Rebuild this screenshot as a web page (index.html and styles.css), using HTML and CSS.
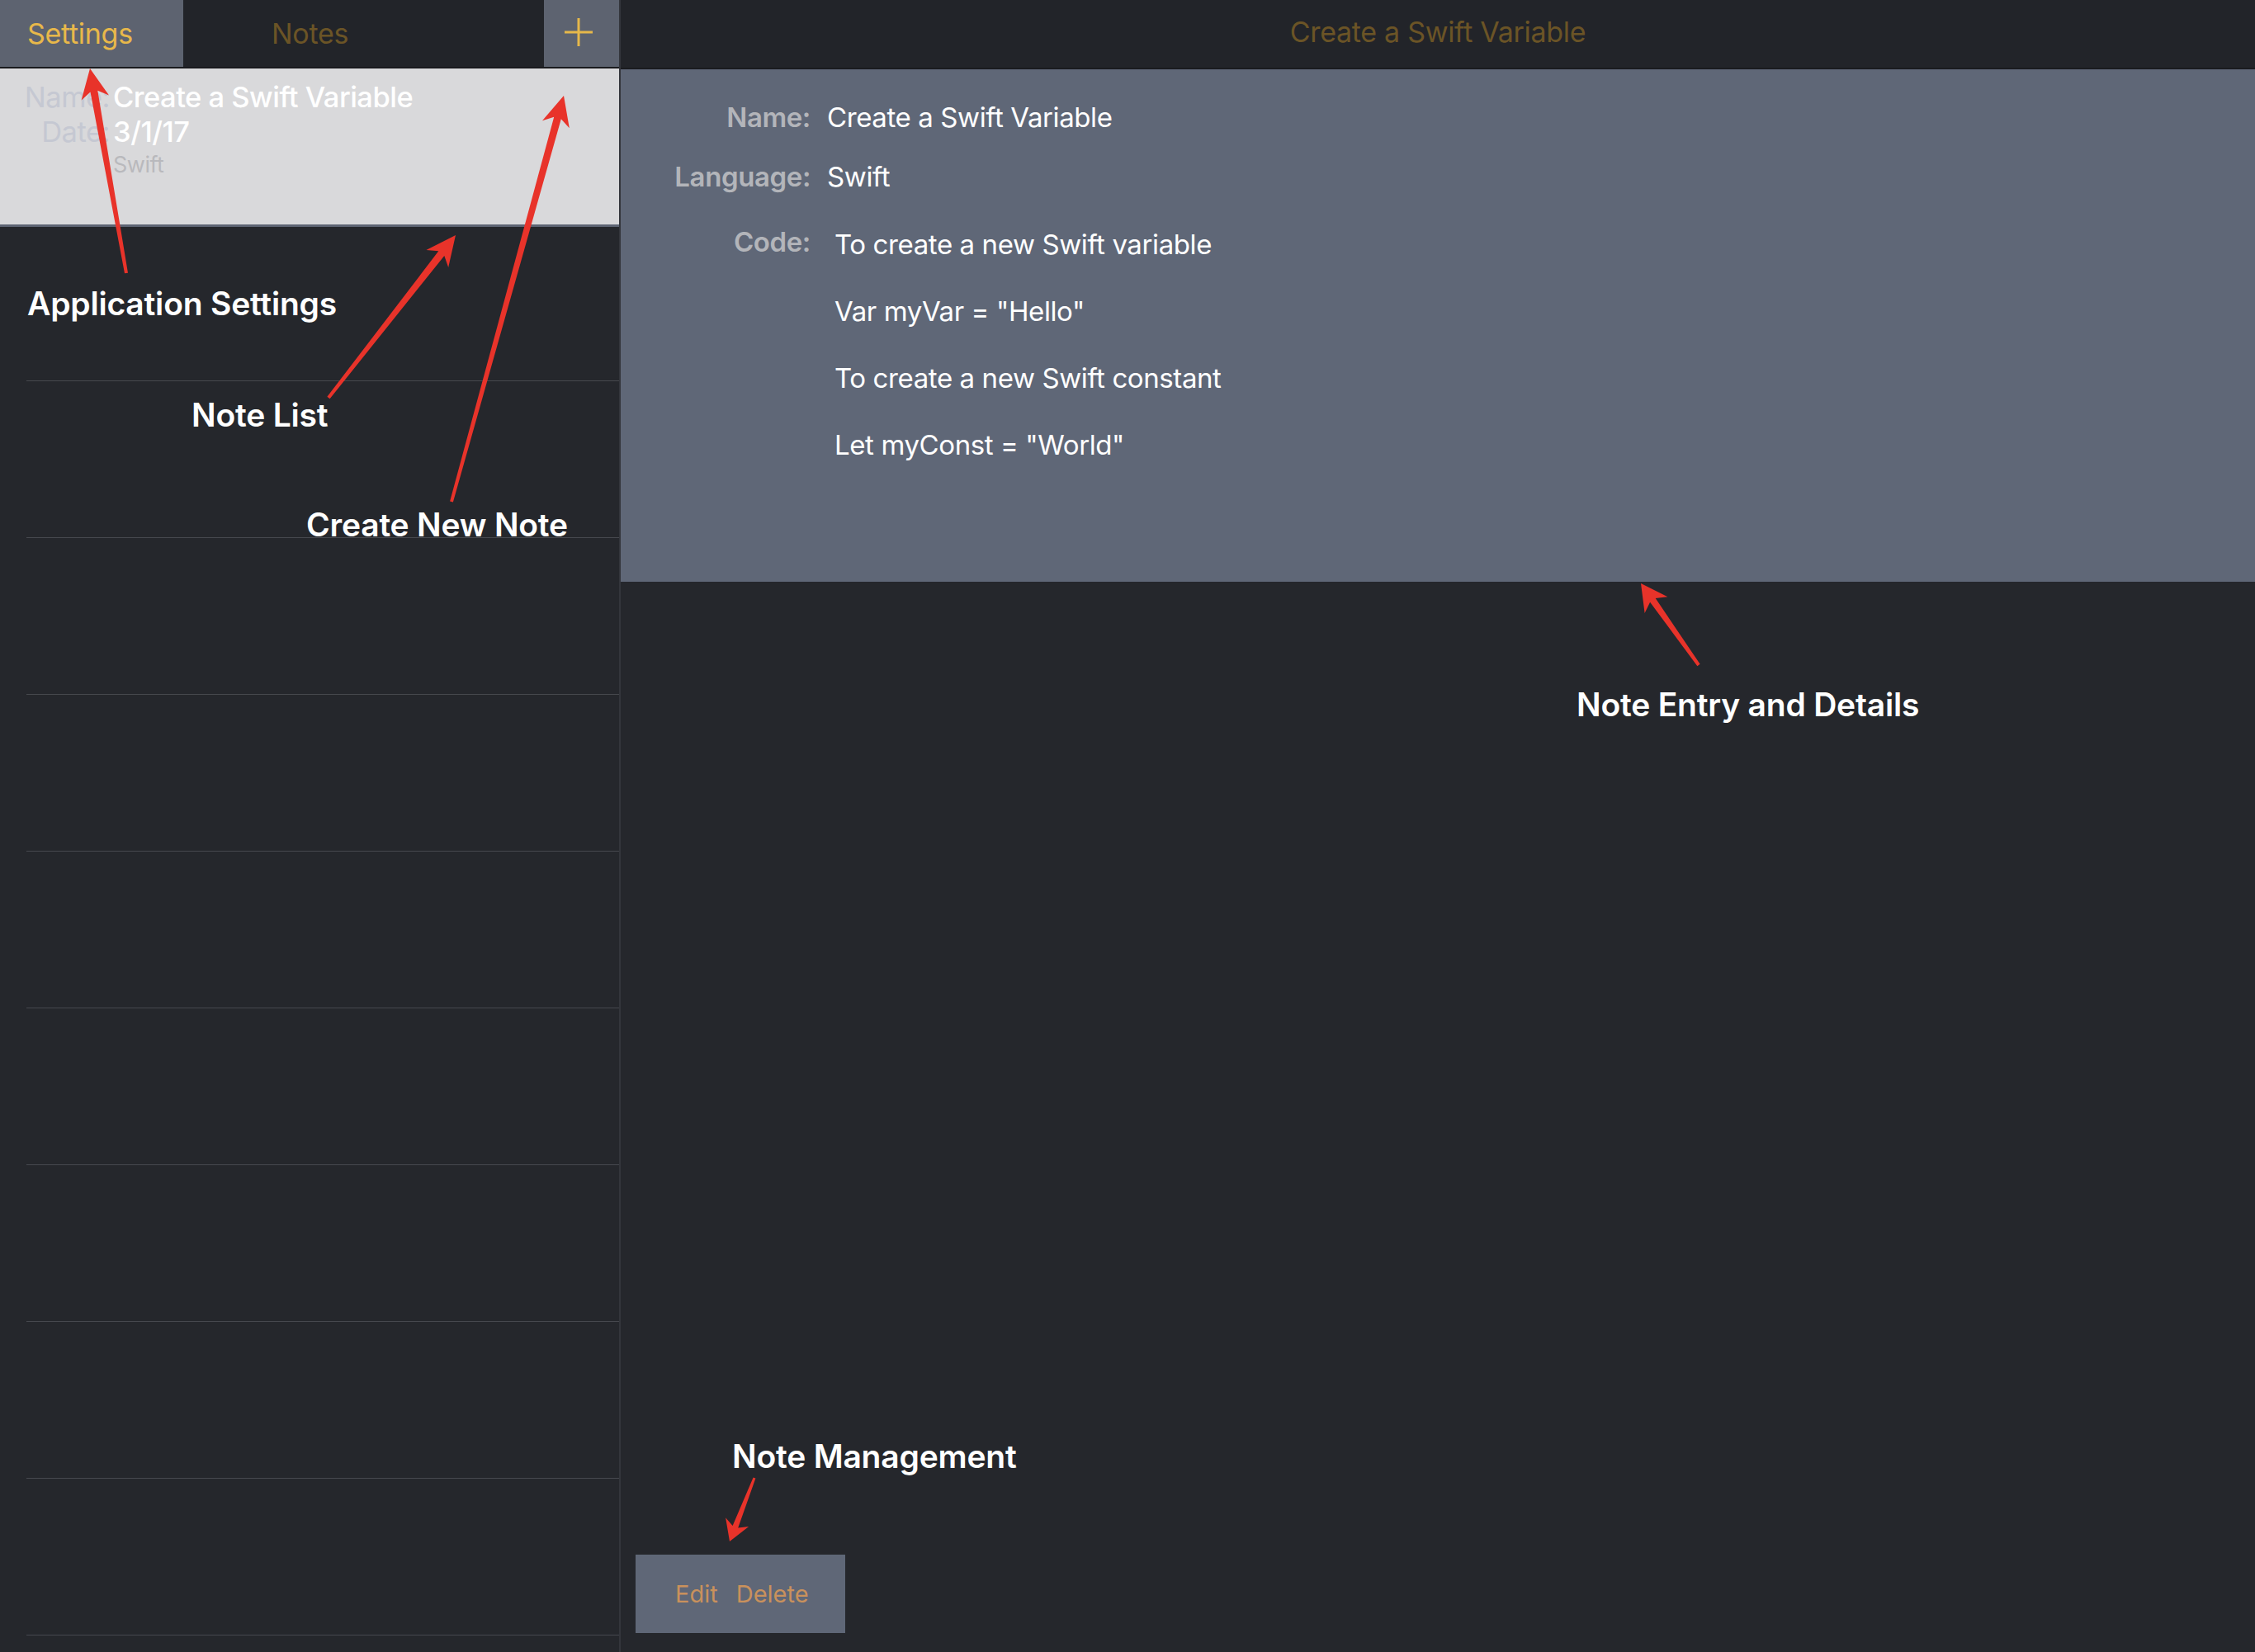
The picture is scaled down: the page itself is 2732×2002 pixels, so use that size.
FILE: index.html
```html
<!DOCTYPE html>
<html lang="en">
<head>
<meta charset="utf-8">
<title>Notes</title>
<link rel="stylesheet" href="styles.css">
</head>
<body>
<div class="app">
  <aside class="sidebar">
    <div class="sidebar-bar">
      <div class="tab tab-active">Settings</div>
      <div class="tab tab-notes">Notes</div>
      <div class="add-btn">
        <svg width="40" height="40" viewBox="0 0 40 40"><path d="M20 3V37M3 20H37" stroke="#e6b84a" stroke-width="3" fill="none"/></svg>
      </div>
    </div>
    <ul class="note-list">
      <li class="note note-selected">
        <div class="note-line"><span class="note-label">Name:</span><span class="note-value">Create a Swift Variable</span></div>
        <div class="note-line"><span class="note-label">Date:</span><span class="note-value">3/1/17</span></div>
        <div class="note-line note-sub"><span class="note-label"></span><span class="note-lang">Swift</span></div>
      </li>
      <li class="note note-first"></li>
      <li class="note"></li>
      <li class="note"></li>
      <li class="note"></li>
      <li class="note"></li>
      <li class="note"></li>
      <li class="note"></li>
      <li class="note"></li>
      <li class="note"></li>
    </ul>
  </aside>
  <main class="detail">
    <header class="detail-bar">Create a Swift Variable</header>
    <section class="detail-panel">
      <div class="field">
        <span class="field-label">Name:</span>
        <span class="field-value">Create a Swift Variable</span>
      </div>
      <div class="field field-lang">
        <span class="field-label">Language:</span>
        <span class="field-value">Swift</span>
      </div>
      <div class="field field-code">
        <span class="field-label code-label">Code:</span>
        <div class="code">
          <div class="code-line">To create a new Swift variable</div>
          <div class="code-line">Var myVar = "Hello"</div>
          <div class="code-line">To create a new Swift constant</div>
          <div class="code-line">Let myConst = "World"</div>
        </div>
      </div>
    </section>
    <div class="detail-empty"></div>
    <footer class="toolbar">
      <div class="toolbar-box">
        <span class="tool-btn">Edit</span>
        <span class="tool-btn">Delete</span>
      </div>
    </footer>
  </main>

  <div class="annotations">
    <svg class="arrows" width="2732" height="2002" viewBox="0 0 2732 2002">
      <g fill="#e8332a">
        <polygon points="155,330.7 118.3,109.8 132,115.4 109,83 98.6,121.4 109.5,111.4 151,331.3"/>
        <polygon points="399.6,483.2 538.3,309.9 543.2,323.9 552,285 516.4,302.9 531.3,304.3 396.4,480.8"/>
        <polygon points="548.9,608.5 679.8,144.2 689.8,155.2 683,116 657,146.2 671.2,141.8 545.1,607.5"/>
        <polygon points="2059.6,804.8 2005.7,725.1 2020.4,723.3 1988,707 1992.6,742.9 1999.1,729.7 2056.4,807.2"/>
        <polygon points="912.6,1790.5 887.6,1849 879.1,1839.3 884,1868 907.1,1850.1 894.2,1851.6 915.4,1791.5"/>
      </g>
    </svg>
    <div class="callout callout-settings">Application Settings</div>
    <div class="callout callout-list">Note List</div>
    <div class="callout callout-new">Create New Note</div>
    <div class="callout callout-entry">Note Entry and Details</div>
    <div class="callout callout-manage">Note Management</div>
  </div>
</div>
</body>
</html>
```

FILE: styles.css
```css
* { box-sizing: border-box; }

html, body {
  margin: 0;
  padding: 0;
  width: 2732px;
  height: 2002px;
  overflow: hidden;
  background: #25272c;
  font-family: Inter, "Noto Sans", "Liberation Sans", sans-serif;
}

.app {
  position: relative;
  display: flex;
  width: 2732px;
  height: 2002px;
  background: #25272c;
}

/* ---------- Sidebar ---------- */
.sidebar {
  width: 752px;
  flex: none;
  display: flex;
  flex-direction: column;
  border-right: 2px solid #34363c;
  overflow: hidden;
}

.sidebar-bar {
  height: 83px;
  flex: none;
  display: flex;
  background: #222429;
  border-bottom: 2px solid #1a1b1f;
}

.tab {
  height: 81px;
  display: flex;
  align-items: center;
  font-size: 34px;
  letter-spacing: -0.3px;
}

.tab-active {
  width: 222px;
  padding-left: 33px;
  background: #5d6370;
  color: #e8b84a;
}

.tab-notes {
  flex: 1;
  padding-left: 107px;
  color: #6b5426;
}

.add-btn {
  width: 91px;
  height: 81px;
  background: #5d6370;
  display: flex;
  align-items: center;
  justify-content: center;
  padding-bottom: 4px;
  padding-right: 8px;
}

.note-list {
  list-style: none;
  margin: 0;
  padding: 0;
  flex: 1;
}

.note {
  height: 190px;
  margin-left: 32px;
  border-bottom: 1px solid #46484e;
}

.note-first {
  height: 187px;
}

.note-selected {
  height: 192px;
  margin-left: 0;
  background: #d9d9db;
  border-bottom: 3px solid #5d6473;
  padding-top: 13px;
}

.note-line {
  display: flex;
  height: 42px;
  align-items: center;
  font-size: 34.5px;
  letter-spacing: -0.5px;
  white-space: nowrap;
}

.note-label {
  width: 133px;
  flex: none;
  text-align: right;
  color: #c5c8d2;
  margin-right: 4px;
}

.note-value {
  color: #ffffff;
  font-weight: 500;
}

.note-sub {
  height: 38px;
}

.note-lang {
  font-size: 27px;
  color: #b9b9bd;
}

/* ---------- Detail ---------- */
.detail {
  flex: 1;
  display: flex;
  flex-direction: column;
}

.detail-bar {
  height: 84px;
  flex: none;
  background: #222429;
  border-bottom: 2px solid #1a1b1f;
  display: flex;
  align-items: center;
  justify-content: center;
  padding-bottom: 6px;
  font-size: 34px;
  color: #6b5426;
  letter-spacing: -0.3px;
}

.detail-panel {
  height: 621px;
  flex: none;
  background: #5f6777;
  padding-top: 36px;
}

.field {
  display: flex;
  align-items: flex-start;
  font-size: 33px;
  line-height: 44px;
  letter-spacing: -0.4px;
}

.field-lang {
  margin-top: 28px;
}

.field-code {
  margin-top: 20px;
}

.field-label {
  width: 230px;
  flex: none;
  text-align: right;
  color: #b3b5ba;
  font-weight: 600;
}

.field-value {
  margin-left: 20px;
  color: #ffffff;
}

.code-label {
  margin-top: 15px;
}

.code {
  margin-left: 29px;
  color: #ffffff;
}

.code-line {
  line-height: 81px;
}

.detail-empty {
  flex: 1;
}

.toolbar {
  flex: none;
  padding: 0 0 23px 18px;
}

.toolbar-box {
  width: 254px;
  height: 95px;
  background: #5f6777;
  display: flex;
  align-items: center;
  padding-left: 48px;
  gap: 22px;
  font-size: 29px;
  color: #c9915c;
}

/* ---------- Annotations ---------- */
.annotations {
  position: absolute;
  left: 0;
  top: 0;
  width: 2732px;
  height: 2002px;
  pointer-events: none;
}

.arrows {
  position: absolute;
  left: 0;
  top: 0;
}

.callout {
  position: absolute;
  color: #ffffff;
  font-size: 39px;
  font-weight: 600;
  line-height: 44px;
  white-space: nowrap;
  letter-spacing: -0.2px;
}

.callout-settings { left: 33px; top: 346px; }
.callout-list { left: 232px; top: 481px; }
.callout-new { left: 371px; top: 614px; }
.callout-entry { left: 1910px; top: 832px; }
.callout-manage { left: 887px; top: 1743px; }
```
